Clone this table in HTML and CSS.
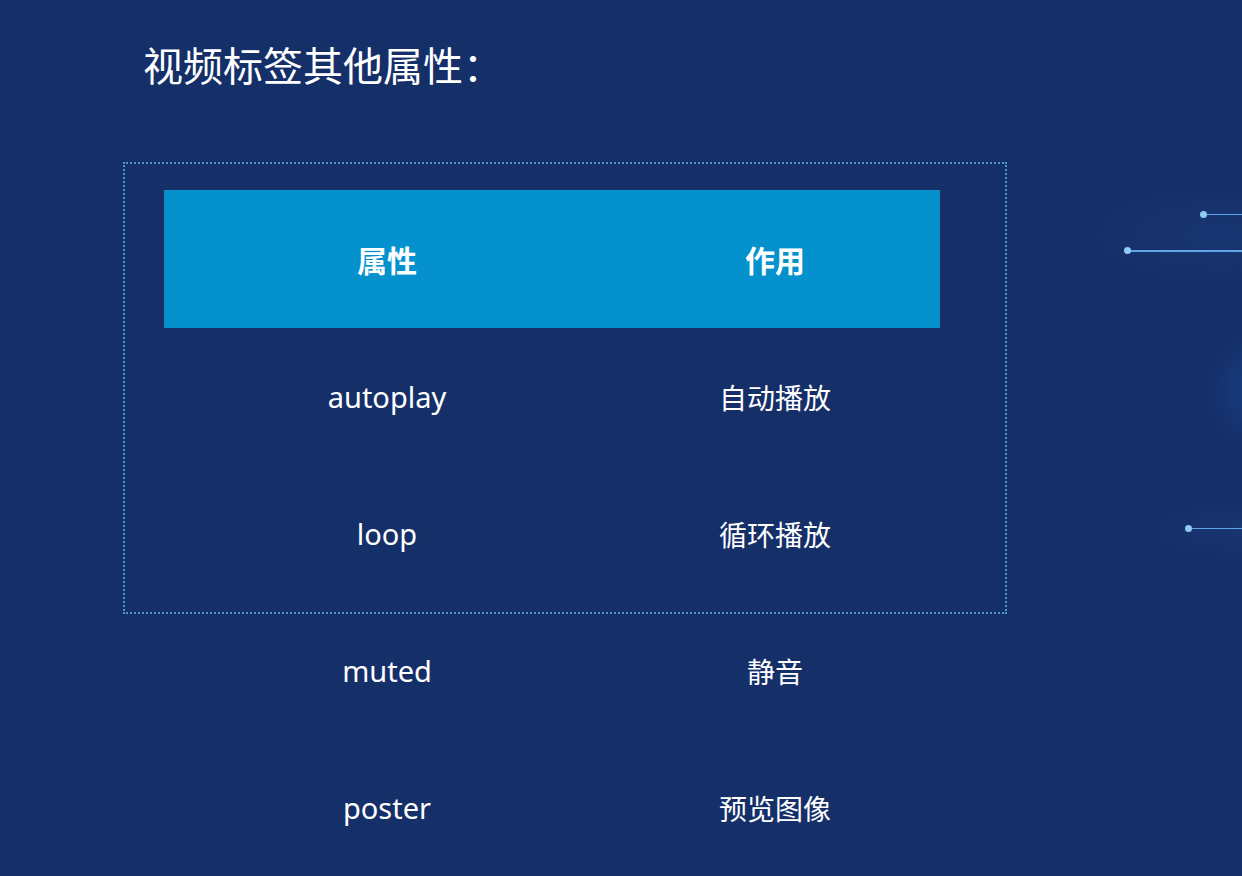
FILE: index.html
```html
<!DOCTYPE html>
<html lang="zh-CN">
<head>
<meta charset="utf-8">
<title>视频标签其他属性</title>
<link rel="stylesheet" href="styles.css">
</head>
<body>
<div class="slide">
  <h1 class="title">视频标签其他属性：</h1>
  <div class="frame">
    <table class="attrs">
      <thead>
        <tr><th class="c1">属性</th><th class="c2">作用</th></tr>
      </thead>
      <tbody>
        <tr><td>autoplay</td><td>自动播放</td></tr>
        <tr><td>loop</td><td>循环播放</td></tr>
        <tr><td>muted</td><td>静音</td></tr>
        <tr><td>poster</td><td>预览图像</td></tr>
      </tbody>
    </table>
  </div>
  <div class="deco glow g1"></div>
  <div class="deco glow g2"></div>
  <div class="deco glow g3"></div>
  <div class="deco line l1"><span class="dot"></span></div>
  <div class="deco line l2"><span class="dot"></span></div>
  <div class="deco line l3"><span class="dot"></span></div>
</div>
</body>
</html>
```

FILE: styles.css
```css
html, body {
  margin: 0;
  padding: 0;
}
body {
  background: #152f69;
  font-family: "Noto Sans", "Noto Sans CJK SC", sans-serif;
  color: #ffffff;
}
.slide {
  position: relative;
  width: 1242px;
  height: 876px;
  overflow: hidden;
  background: #152f69;
}
.title {
  margin: 0;
  padding: 36px 0 0 143px;
  font-family: "Noto Sans CJK SC", sans-serif;
  font-weight: 400;
  font-size: 40px;
  line-height: 56px;
}
.frame {
  margin: 70px 0 0 123px;
  width: 884px;
  height: 452px;
  border: 2px dotted #5293d4;
  padding: 26px 0 0 39px;
  box-sizing: border-box;
}
.attrs {
  border-collapse: collapse;
  width: 776px;
  table-layout: fixed;
}
.attrs th {
  background: #0591ce;
  height: 138px;
  padding: 0;
  font-family: "Noto Sans CJK SC", sans-serif;
  font-weight: 700;
  font-size: 30px;
  text-align: center;
  vertical-align: middle;
}
.attrs .c1 { width: 446px; }
.attrs .c2 { width: 330px; }
.attrs td {
  height: 137px;
  padding: 0;
  text-align: center;
  vertical-align: middle;
  font-size: 29px;
  font-family: "Noto Sans", "Noto Sans CJK SC", sans-serif;
}
.attrs td:nth-child(2) {
  font-family: "Noto Sans CJK SC", sans-serif;
  font-size: 28px;
}
.deco { position: absolute; }
.glow {
  border-radius: 50%;
}
.g1 {
  left: 1090px; top: 185px; width: 260px; height: 100px;
  background: radial-gradient(ellipse at center, rgba(40,80,150,0.22), rgba(21,47,105,0) 70%);
}
.g2 {
  left: 1205px; top: 325px; width: 130px; height: 130px;
  background: radial-gradient(circle at center, rgba(30,80,160,0.55), rgba(21,47,105,0) 70%);
}
.g3 {
  left: 1150px; top: 500px; width: 200px; height: 60px;
  background: radial-gradient(ellipse at center, rgba(40,80,150,0.22), rgba(21,47,105,0) 70%);
}
.line {
  height: 1px;
  background: #5fa6e6;
  right: 0;
}
.l1 { left: 1204px; top: 214px; }
.l2 { left: 1128px; top: 250px; height: 2px; }
.l3 { left: 1189px; top: 528px; }
.dot {
  position: absolute;
  left: -4px;
  top: -3px;
  width: 7px;
  height: 7px;
  border-radius: 50%;
  background: #8ecbf5;
}
```
